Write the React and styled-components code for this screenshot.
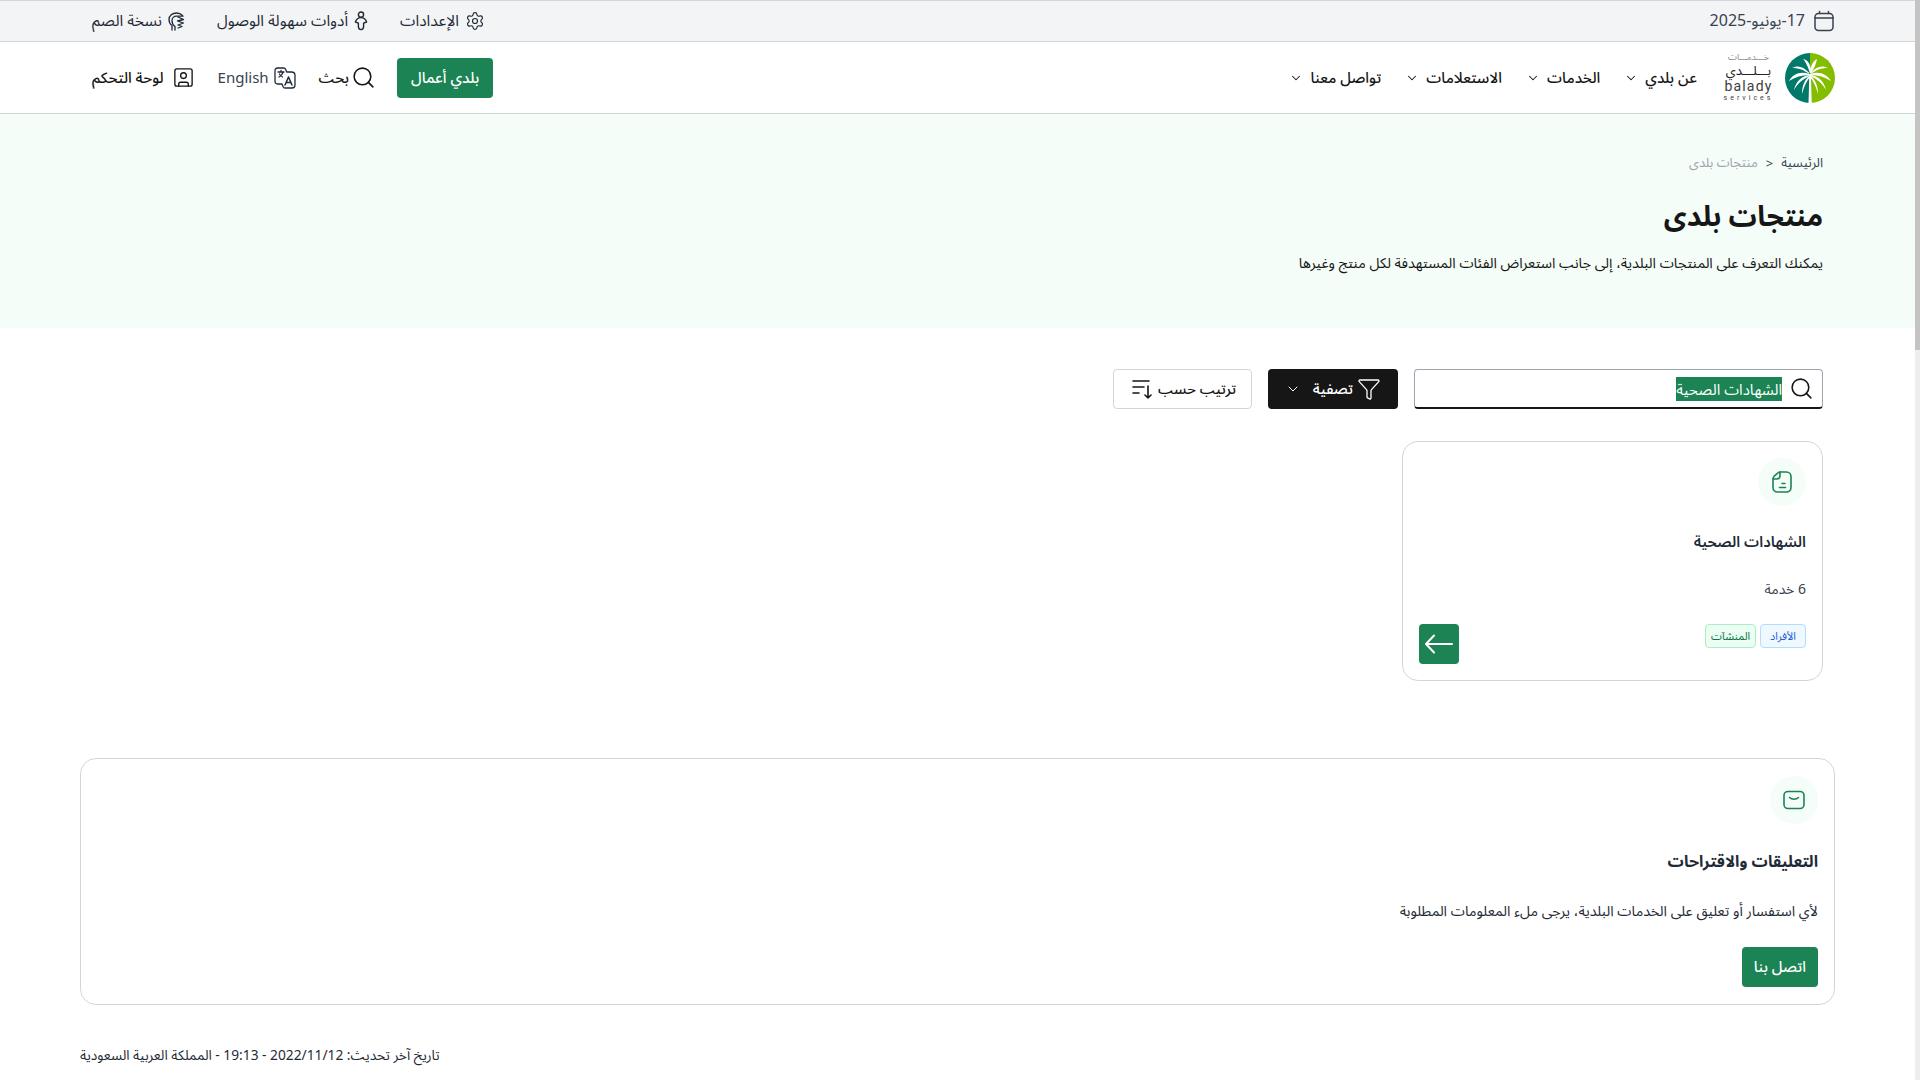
import React from 'react';
import styled, { createGlobalStyle } from 'styled-components';
import { Settings, Search, SquareUser, Funnel, ChevronDown } from 'lucide-react';

const GlobalStyle = createGlobalStyle`
    html, body {
        height: 100%;
        overflow: hidden;
    }
    body {
        margin: 0;
        background: #fff;
        color: #161616;
        font-family: "Noto Sans", "Noto Sans Arabic", "DejaVu Sans", sans-serif;
    }
`

const Frame = styled.div`
    height: 100vh;
    display: flex;
    overflow: hidden;
`

const Page = styled.div`
    flex: 1;
    min-width: 0;
`

const ScrollTrack = styled.div`
    width: 5px;
    flex: none;
    background: #eeeeee;
`

const ScrollThumb = styled.div`
    height: 350px;
    background: #c4c4c4;
`

const TopBar = styled.div`
    height: 42px;
    box-sizing: border-box;
    display: flex;
    align-items: center;
    justify-content: space-between;
    padding: 0 80px 0 92px;
    background: #f3f4f6;
    border-top: 1px solid #d2d6db;
    border-bottom: 1px solid #d2d6db;
    font-size: 15.5px;
    color: #1f2a37;
`

const TopGroup = styled.div`
    display: flex;
    align-items: center;
    gap: 32px;
`

const TopItem = styled.span`
    display: flex;
    align-items: center;
    gap: 6px;
`

const DateLabel = styled.span`
    font-size: 16px;
    color: #384250;
    margin-right: 2px;
`

const Header = styled.header`
    height: 72px;
    box-sizing: border-box;
    display: flex;
    align-items: center;
    justify-content: space-between;
    padding: 0 80px 0 92px;
    border-bottom: 1px solid #d2d6db;
`

const Nav = styled.nav`
    display: flex;
    align-items: center;
    gap: 24px;
`

const Logo = styled.div`
    display: flex;
    align-items: center;
    gap: 10px;
    margin-left: 1px;
`

const LogoText = styled.div`
    display: flex;
    flex-direction: column;
    width: 53px;
    font-family: Roboto, "Noto Sans Arabic", sans-serif;
`

const LogoLine = styled.span`
    display: block;
    white-space: nowrap;
    font-size: ${p => p.$size}px;
    line-height: 1.17;
    color: ${p => p.$color || '#3d3d3d'};
    text-align: center;
    letter-spacing: ${p => p.$spacing || 0}px;
`

const NavItem = styled.a`
    display: flex;
    align-items: center;
    gap: 7px;
    font-size: 15px;
    font-weight: 500;
    color: #161616;
`

const Actions = styled.div`
    display: flex;
    align-items: center;
    gap: 23px;
`

const ActionItem = styled.a`
    display: flex;
    align-items: center;
    gap: ${p => p.$gap || 5}px;
    font-size: 15px;
    font-weight: 500;
    color: #161616;
`

const SearchAction = styled(ActionItem)`
    margin-right: -2px;
`

const LatinLabel = styled.span`
    font-weight: 400;
    color: #384250;
    font-size: 15px;
    padding-bottom: 2px;
`

const PrimaryButton = styled.button`
    height: 40px;
    padding: 0 ${p => p.$pad || 12}px;
    border: 0;
    border-radius: 4px;
    background: #1b8354;
    color: #fff;
    font: inherit;
    font-size: 15px;
    font-weight: 500;
`

const Hero = styled.section`
    height: 214px;
    box-sizing: border-box;
    padding: 37px 92px 0;
    background: #f5fdf8;
`

const Breadcrumb = styled.div`
    display: flex;
    gap: 8px;
    font-size: 13px;
    height: 24px;
    align-items: center;
`

const Crumb = styled.span`
    color: ${p => (p.$muted ? '#9da4ae' : '#384250')};
`

const Title = styled.h1`
    margin: 21px 0 0;
    font-size: 28px;
    line-height: 38px;
    font-weight: 700;
    color: #161616;
`

const Lead = styled.p`
    margin: 17px 0 0;
    font-size: 14.3px;
    line-height: 24px;
    color: #161616;
`

const Content = styled.main`
    padding: 41px 92px 0;
`

const FilterRow = styled.div`
    display: flex;
    align-items: center;
    gap: 16px;
`

const SearchBox = styled.div`
    width: 409px;
    height: 40px;
    box-sizing: border-box;
    display: flex;
    align-items: center;
    gap: 7px;
    padding: 0 8px 0 12px;
    border: 1px solid #9da4ae;
    border-bottom: 2px solid #161616;
    border-radius: 4px;
`

const Selected = styled.span`
    display: block;
    height: 24px;
    line-height: 24px;
    font-size: 15px;
    background: #1b8354;
    color: #fff;
`

const DarkButton = styled.button`
    width: 130px;
    height: 40px;
    display: flex;
    align-items: center;
    gap: 4px;
    padding: 0 17px 0 16px;
    box-sizing: border-box;
    border: 0;
    border-radius: 4px;
    background: #161616;
    color: #fff;
    font: inherit;
    font-size: 15px;
    font-weight: 500;
    white-space: nowrap;
`

const ChevronSlot = styled.span`
    display: flex;
    margin-right: 8px;
`

const OutlineButton = styled.button`
    width: 139px;
    height: 40px;
    display: flex;
    align-items: center;
    justify-content: space-between;
    padding: 0 15px 0 18px;
    box-sizing: border-box;
    background: #fff;
    border: 1px solid #d2d6db;
    border-radius: 4px;
    color: #161616;
    font: inherit;
    font-size: 14.5px;
    font-weight: 500;
    white-space: nowrap;
`

const Card = styled.article`
    width: 421px;
    height: 240px;
    box-sizing: border-box;
    margin-top: 32px;
    padding: 16px;
    border: 1px solid #d2d6db;
    border-radius: 16px;
    display: flex;
    flex-direction: column;
`

const IconCircle = styled.div`
    width: 48px;
    height: 48px;
    flex: none;
    border-radius: 50%;
    background: #f5fdf8;
    display: flex;
    align-items: center;
    justify-content: center;
`

const CardTitle = styled.h3`
    margin: 23px 0 0;
    font-size: 15px;
    line-height: 24px;
    font-weight: 600;
    color: #1f2a37;
`

const CardMeta = styled.div`
    margin-top: 27px;
    font-size: 14px;
    line-height: 18px;
    color: #384250;
`

const CardFooter = styled.div`
    margin-top: auto;
    display: flex;
    align-items: flex-start;
    justify-content: space-between;
`

const Tags = styled.div`
    display: flex;
    gap: 4px;
`

const Tag = styled.span`
    height: 24px;
    box-sizing: border-box;
    display: flex;
    align-items: center;
    padding: 0 ${p => (p.$tone === 'blue' ? 9 : 5)}px;
    font-size: 11px;
    border-radius: 4px;
    border: 1px solid ${p => (p.$tone === 'blue' ? '#b2ddff' : '#abefc6')};
    background: ${p => (p.$tone === 'blue' ? '#eff8ff' : '#ecfdf3')};
    color: ${p => (p.$tone === 'blue' ? '#175cd3' : '#067647')};
`

const ArrowButton = styled.button`
    width: 40px;
    height: 40px;
    padding: 0;
    border: 0;
    border-radius: 4px;
    background: #1b8354;
    display: flex;
    align-items: center;
    justify-content: center;
`

const Feedback = styled.section`
    margin: 77px 80px 0;
    height: 247px;
    box-sizing: border-box;
    padding: 17px 16px 16px;
    border: 1px solid #d2d6db;
    border-radius: 16px;
`

const FeedbackTitle = styled.h3`
    margin: 23px 0 0;
    font-size: 16px;
    line-height: 28px;
    font-weight: 700;
    color: #1f2a37;
`

const FeedbackText = styled.p`
    margin: 24px 0 24px;
    font-size: 14.3px;
    line-height: 24px;
    color: #1f2a37;
`

const Footer = styled.footer`
    margin: 38px 80px 0;
    display: flex;
    justify-content: flex-end;
    font-size: 13.75px;
    line-height: 24px;
    color: #1f2a37;
`

const CalendarIcon = () => (
    <svg width="22" height="22" viewBox="0 0 22 22" fill="none" stroke="#384250" strokeWidth="1.5" strokeLinecap="round">
        <rect x="2" y="3.5" width="18" height="17" rx="3.5" />
        <path d="M2 8h18M6.5 1.5v2M15.5 1.5v2" />
    </svg>
)

const PersonIcon = () => (
    <svg width="14" height="20" viewBox="0 0 14 20" fill="none" stroke="#1f2a37" strokeWidth="1.4" strokeLinejoin="round">
        <circle cx="7" cy="3.6" r="2.6" />
        <path d="M7 6.600c-2.600 0-4.800 1.800-5.600 4.400l3 1.200v3.400c0 1.700 1.100 3 2.600 3s2.600-1.300 2.600-3v-3.400l3-1.200C11.800 8.400 9.600 6.600 7 6.600z" />
    </svg>
)

const EarIcon = () => (
    <svg width="17" height="19" viewBox="0 0 17 19" fill="none" stroke="#1f2a37" strokeWidth="1.3" strokeLinecap="round" strokeLinejoin="round">
        <path d="M4 18V13.500C2 12 1 10 1 7.500 1 3.500 4.500 1 8.500 1c2.500 0 4.500 1 6 2.500" />
        <path d="M7 18v-3.500C5 13 4 11 4 8.500 4 6 6 4.200 8.500 4.200h6.500" />
        <path d="M10 5l5.500 2.500-6 1.500 6 2-5.500 2 4 1.500-4 1.500" />
    </svg>
)

const TranslateIcon = () => (
    <svg width="22" height="22" viewBox="0 0 22 22" fill="none" stroke="#1f2a37" strokeWidth="1.3" strokeLinecap="round" strokeLinejoin="round">
        <path d="M3.500 1h6.200c1 0 1.600.5 2 1.400l1 2.600h4.800c1.900 0 3.500 1.500 3.500 3.500V18c0 1.700-1.300 3-3 3H11c-1 0-1.700-.5-2-1.400l-1-2.600H3.500C1.900 17 1 15.700 1 14V3.500C1 2 2 1 3.500 1z" />
        <path d="M4 5h6M7 3.500V5M9 5c-.4 2.200-1.800 3.800-4 5M5.500 7c.6 1.400 1.700 2.500 3 3" />
        <path d="M11 18l3.500-8 3.500 8M12.200 15.500h4.600" strokeWidth="1.500" />
    </svg>
)

const SortIcon = () => (
    <svg width="21" height="20" viewBox="0 0 21 20" fill="none" stroke="#161616" strokeWidth="1.6" strokeLinecap="round" strokeLinejoin="round">
        <path d="M1 2h16M1 8h11M1 14h6" />
        <path d="M16 7v12M13 16l3 3 3-3" />
    </svg>
)

const DocIcon = () => (
    <svg width="20" height="24" viewBox="0 0 20 24" fill="none" stroke="#1b8354" strokeWidth="1.6" strokeLinecap="round" strokeLinejoin="round">
        <path d="M8 2h6.500C17 2 19 4 19 6.500v11c0 2.500-2 4.500-4.500 4.500h-9C3 22 1 20 1 17.500V9" />
        <path d="M8 2v3.500C8 7.500 6.500 9 4.500 9H1c0-1 .4-2 1.200-2.800L6 2.800C6.500 2.300 7.200 2 8 2z" />
        <path d="M10 13.500h3M7.500 17.500h6" />
    </svg>
)

const MailIcon = () => (
    <svg width="22" height="20" viewBox="0 0 22 20" fill="none" stroke="#1b8354" strokeWidth="1.6" strokeLinecap="round" strokeLinejoin="round">
        <rect x="1" y="1.500" width="20" height="17" rx="4" />
        <path d="M6.500 7.500c1.200 1.100 2.800 1.700 4.500 1.700s3.300-.6 4.500-1.700" />
    </svg>
)

const BackArrow = () => (
    <svg width="30" height="20" viewBox="0 0 30 20" fill="none" stroke="#fff" strokeWidth="2" strokeLinecap="round" strokeLinejoin="round">
        <path d="M28 10H2M10 1.500L2 10l8 8.500" />
    </svg>
)

const PalmLogo = () => (
    <svg width="50" height="50" viewBox="0 0 50 50">
        <path d="M25 0a25 25 0 0 0 0 50z" fill="#00796b" />
        <path d="M25 0a25 25 0 0 1 0 50z" fill="#84bd00" />
        <g fill="#fff">
            <path d="M23.500 50c.4-10 .6-20 .7-29h1.800c0 9 .4 19 .8 29z" />
            <path d="M25 20C22 11 20 8 18 6c5 1 8 5 8 14z" />
            <path d="M25 20c1-8 3-12 7-14-1 5-3 10-6 14z" />
            <path d="M24.500 20C18 13 12 12 7 15c7 0 12 2 17 6z" />
            <path d="M25.500 20c6-7 12-8 17.500-5-7 0-12 2-17 6z" />
            <path d="M24.500 21C15 18 8 21 4 28c6-4 13-6 20-6z" />
            <path d="M25.500 21c9-3 16 0 20.500 7-6-4-13-6-20-6z" />
            <path d="M24.500 22C17 23 11 28 9 37c4-7 9-11 15.500-14z" />
            <path d="M25.500 22c7.500 1 13.500 6 15.500 15-4-7-9-11-15.500-14z" />
            <path d="M24 23c-4 4-7 9-7 18 2-7 4-12 8-17z" />
            <path d="M26 23c4 4 7 9 7 18-2-7-4-12-8-17z" />
        </g>
    </svg>
)

const navLinks = ['عن بلدي', 'الخدمات', 'الاستعلامات', 'تواصل معنا']

const App = () => {
    return (
        <Frame>
            <GlobalStyle />
            <Page dir="rtl">
                <TopBar>
                    <TopItem>
                        <CalendarIcon />
                        <DateLabel>17-يونيو-2025</DateLabel>
                    </TopItem>
                    <TopGroup>
                        <TopItem><Settings size={20} strokeWidth={1.4} />الإعدادات</TopItem>
                        <TopItem><PersonIcon />أدوات سهولة الوصول</TopItem>
                        <TopItem><EarIcon />نسخة الصم</TopItem>
                    </TopGroup>
                </TopBar>
                <Header>
                    <Nav>
                        <Logo>
                            <PalmLogo />
                            <LogoText>
                                <LogoLine $size={9} $color="#8a8a8a">خـــدمـــات</LogoLine>
                                <LogoLine $size={13} $color="#222">بـــلـــدي</LogoLine>
                                <LogoLine dir="ltr" $size={14} $spacing={1.2}>balady</LogoLine>
                                <LogoLine dir="ltr" $size={7} $spacing={3}>services</LogoLine>
                            </LogoText>
                        </Logo>
                        {navLinks.map(link => (
                            <NavItem key={link}>
                                {link}
                                <ChevronDown size={14} strokeWidth={1.8} />
                            </NavItem>
                        ))}
                    </Nav>
                    <Actions>
                        <PrimaryButton $pad={14}>بلدي أعمال</PrimaryButton>
                        <SearchAction $gap={2}><Search size={25} strokeWidth={1.5} />بحث</SearchAction>
                        <ActionItem><TranslateIcon /><LatinLabel>English</LatinLabel></ActionItem>
                        <ActionItem $gap={8}><SquareUser size={23} strokeWidth={1.4} />لوحة التحكم</ActionItem>
                    </Actions>
                </Header>
                <Hero>
                    <Breadcrumb>
                        <Crumb>الرئيسية</Crumb>
                        <Crumb>&lt;</Crumb>
                        <Crumb $muted>منتجات بلدى</Crumb>
                    </Breadcrumb>
                    <Title>منتجات بلدى</Title>
                    <Lead>يمكنك التعرف على المنتجات البلدية، إلى جانب استعراض الفئات المستهدفة لكل منتج وغيرها</Lead>
                </Hero>
                <Content>
                    <FilterRow>
                        <SearchBox>
                            <Search size={25} strokeWidth={1.5} />
                            <Selected>الشهادات الصحية</Selected>
                        </SearchBox>
                        <DarkButton>
                            <Funnel size={24} strokeWidth={1.3} />
                            تصفية
                            <ChevronSlot><ChevronDown size={16} strokeWidth={1.5} /></ChevronSlot>
                        </DarkButton>
                        <OutlineButton>
                            ترتيب حسب
                            <SortIcon />
                        </OutlineButton>
                    </FilterRow>
                    <Card>
                        <IconCircle><DocIcon /></IconCircle>
                        <CardTitle>الشهادات الصحية</CardTitle>
                        <CardMeta>6 خدمة</CardMeta>
                        <CardFooter>
                            <Tags>
                                <Tag $tone="blue">الأفراد</Tag>
                                <Tag $tone="green">المنشآت</Tag>
                            </Tags>
                            <ArrowButton><BackArrow /></ArrowButton>
                        </CardFooter>
                    </Card>
                </Content>
                <Feedback>
                    <IconCircle><MailIcon /></IconCircle>
                    <FeedbackTitle>التعليقات والاقتراحات</FeedbackTitle>
                    <FeedbackText>لأي استفسار أو تعليق على الخدمات البلدية، يرجى ملء المعلومات المطلوبة</FeedbackText>
                    <PrimaryButton>اتصل بنا</PrimaryButton>
                </Feedback>
                <Footer>تاريخ آخر تحديث: 2022/11/12 - 19:13 - المملكة العربية السعودية</Footer>
            </Page>
            <ScrollTrack><ScrollThumb /></ScrollTrack>
        </Frame>
    )
}

export default App;
